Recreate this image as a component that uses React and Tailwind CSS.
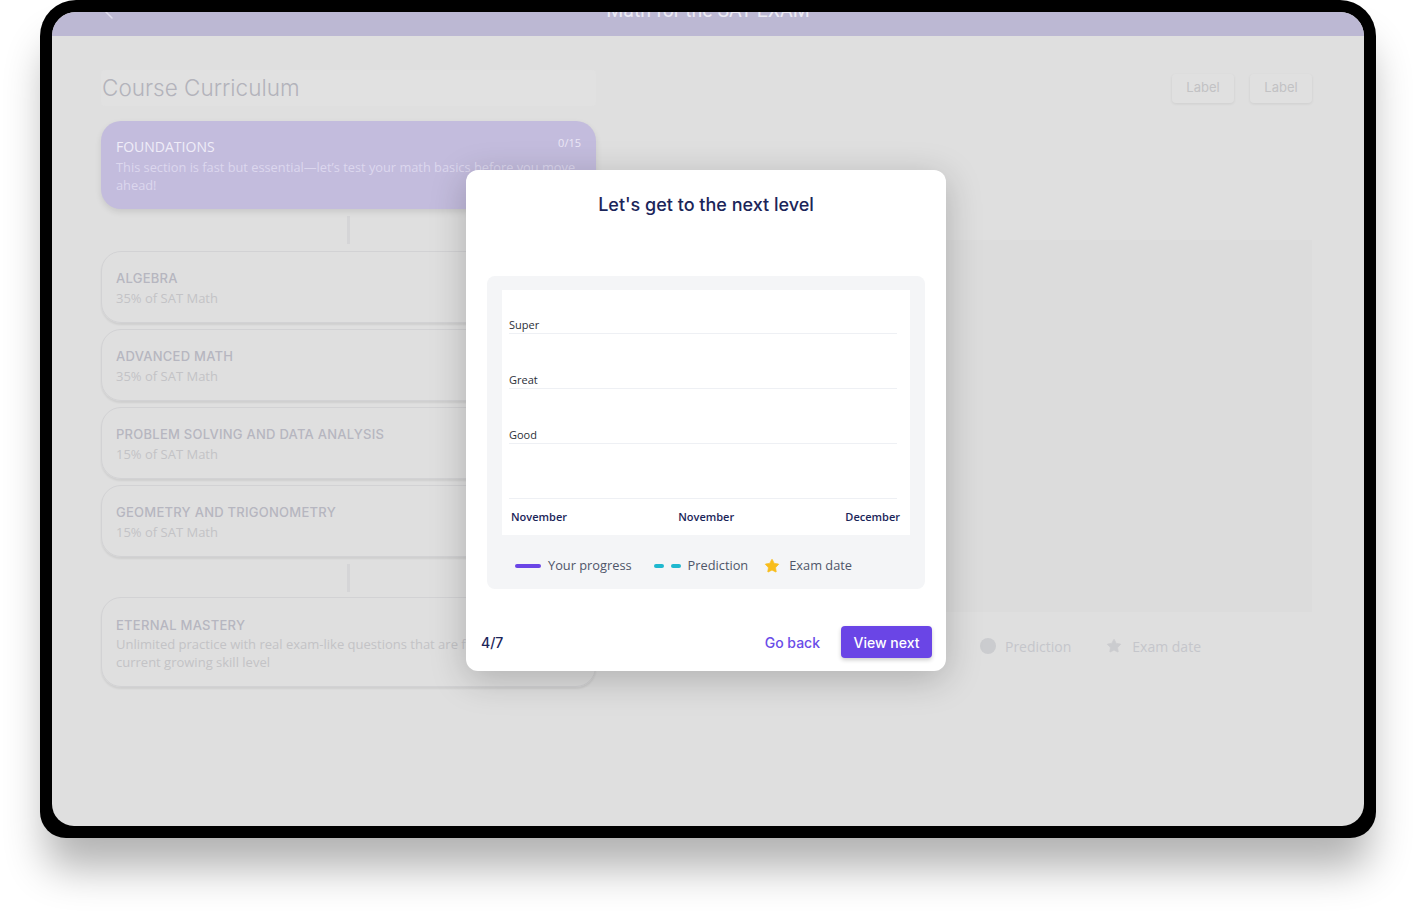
import { Star } from "lucide-react";

const title = { fontFamily: "Inter, 'Noto Sans', sans-serif" };
const body = { fontFamily: "'Open Sans', 'Noto Sans', sans-serif" };

const topics = [
  { name: "Algebra", share: "35% of SAT Math" },
  { name: "Advanced Math", share: "35% of SAT Math" },
  { name: "Problem Solving and Data Analysis", share: "15% of SAT Math" },
  { name: "Geometry and Trigonometry", share: "15% of SAT Math" },
];

const TopicCard = ({ name, share }) => (
  <div className="h-[72px] rounded-[20px] border border-[#d2d2d4] px-[14px] pt-[16px] shadow-[0_2px_2px_rgba(0,0,0,0.07)]">
    <p style={title} className="text-[13px] leading-5 font-medium uppercase tracking-[0.02em] text-[#b6b6c0]">
      {name}
    </p>
    <p style={body} className="text-[13px] leading-5 text-[#c3c3c6]">
      {share}
    </p>
  </div>
);

const Connector = ({ tight }) => (
  <div className={`flex justify-center pt-[7px] ${tight ? "pb-[5px]" : "pb-[7px]"}`}>
    <div className="w-[3px] h-[28px] bg-[#d5d5d7]" />
  </div>
);

const ChartRow = ({ label, first }) => (
  <div
    className={`${first ? "h-[30px]" : "h-[55px]"} flex items-end pb-[1px] border-b border-[#eef0f4] ml-[7px] mr-[13px]`}
  >
    <span style={body} className="text-[11px] leading-[14px] text-[#2b2f38]">
      {label}
    </span>
  </div>
);

const ProgressModal = () => (
  <div className="absolute left-[414px] top-[158px] w-[480px] h-[501px] bg-white rounded-[12px] shadow-[0_8px_36px_rgba(0,0,0,0.22)] flex flex-col">
    <h2 style={title} className="text-center text-[18px] leading-6 font-medium text-[#1b2559] mt-[23px]">
      Let's get to the next level
    </h2>

    <div className="mx-[21px] mt-[59px] h-[313px] rounded-[8px] bg-[#f4f5f7] px-[15px] pt-[14px]">
      <div className="bg-white h-[245px] pt-[14px]">
        <ChartRow label="Super" first />
        <ChartRow label="Great" />
        <ChartRow label="Good" />
        <ChartRow label="" />
        <div
          style={body}
          className="flex justify-between pl-[9px] pr-[10px] mt-[11px] text-[11px] leading-[14px] font-semibold text-[#1b2559]"
        >
          <span>November</span>
          <span>November</span>
          <span>December</span>
        </div>
      </div>

      <div style={body} className="flex items-center h-[54px] pl-[13px] pt-[8px] text-[12.8px] text-[#4f5669]">
        <span className="w-[26px] h-[4px] rounded-full bg-[#6a45e6]" />
        <span className="ml-[7px]">Your progress</span>
        <span className="ml-[22px] w-[10px] h-[4px] rounded-full bg-[#1fb8cf]" />
        <span className="ml-[7px] w-[10px] h-[4px] rounded-full bg-[#1fb8cf]" />
        <span className="ml-[7px]">Prediction</span>
        <Star size={16} className="ml-[16px] text-[#f8bd1c] fill-[#f8bd1c]" strokeWidth={1} />
        <span className="ml-[9px]">Exam date</span>
      </div>
    </div>

    <div className="flex items-center justify-between mt-auto mb-[13px] pl-[15px] pr-[14px]">
      <span style={title} className="text-[14px] font-medium text-[#1b2559]">
        4/7
      </span>
      <div className="flex items-center gap-[21px]">
        <button style={title} className="text-[14px] font-medium text-[#6a4de8]">
          Go back
        </button>
        <button
          style={title}
          className="h-[32px] w-[91px] rounded-[4px] bg-[#6a45e6] text-[14px] font-medium text-white shadow-[0_2px_4px_rgba(0,0,0,0.2)]"
        >
          View next
        </button>
      </div>
    </div>
  </div>
);

export default function App() {
  return (
    <div className="w-[1416px] h-[919px] bg-white overflow-hidden pl-[40px]">
      <div className="w-[1336px] h-[838px] bg-black p-[12px] rounded-t-[36px] rounded-b-[26px] shadow-[0_36px_42px_-6px_rgba(0,0,0,0.3)]">
        <div className="relative h-full rounded-t-[24px] rounded-b-[22px] overflow-hidden bg-[#dfdfdf]">
          {/* top bar, scrolled half out of view */}
          <div className="h-[24px] bg-[#bcb8d3] flex items-start overflow-hidden">
            <svg width="10" height="20" viewBox="0 0 10 20" className="ml-[52px] -mt-[11px] shrink-0">
              <path d="M8 3 L1 10 L8 17" fill="none" stroke="#dedcec" strokeWidth="1.5" strokeLinecap="round" strokeLinejoin="round" />
            </svg>
            <p
              className="flex-1 text-center text-[19.5px] leading-6 -mt-[13px] pr-[62px] text-[#ebe9f3]"
              style={{ fontFamily: "Roboto, 'Noto Sans', sans-serif" }}
            >
              Math for the SAT EXAM
            </p>
          </div>

          <div className="pl-[49px] pr-[52px] pt-[34px]">
            <div className="flex items-center justify-between h-[36px]">
              <div className="w-[495px] h-full flex items-center bg-[#e1e1e1] rounded-[4px]">
                <h1 style={title} className="ml-[1px] text-[22.5px] font-light text-[#b3b3bb]">
                  Course Curriculum
                </h1>
              </div>
              <div className="flex gap-[16px]">
                {["Label", "Label"].map((l, i) => (
                  <span
                    key={i}
                    style={title}
                    className="w-[62px] h-[29px] flex items-center justify-center rounded-[4px] bg-[#e0e0e0] text-[13px] text-[#c2c2c4] shadow-[0_1px_3px_rgba(0,0,0,0.08)]"
                  >
                    {l}
                  </span>
                ))}
              </div>
            </div>

            <div className="flex mt-[15px]">
              <div className="w-[495px] shrink-0">
                <div className="relative h-[88px] rounded-[20px] bg-[#c3bcdd] pl-[15px] pr-[6px] pt-[16px] shadow-[0_3px_6px_rgba(0,0,0,0.1)]">
                  <span style={body} className="absolute right-[15px] top-[14px] text-[11px] text-[#ebe7f6]">
                    0/15
                  </span>
                  <p style={body} className="text-[14px] leading-5 text-[#efecf8]">
                    FOUNDATIONS
                  </p>
                  <p style={body} className="text-[12.8px] leading-[18px] mt-[1px] text-[#dcd7ee]">
                    This section is fast but essential—let’s test your math basics before you move ahead!
                  </p>
                </div>

                <Connector />

                <div className="flex flex-col gap-[6px]">
                  {topics.map((t) => (
                    <TopicCard key={t.name} {...t} />
                  ))}
                </div>

                <Connector tight />

                <div className="h-[90px] rounded-[20px] border border-[#d2d2d4] px-[14px] pt-[17px] shadow-[0_2px_2px_rgba(0,0,0,0.07)]">
                  <p style={title} className="text-[13px] leading-5 font-medium uppercase tracking-[0.02em] text-[#b6b6c0]">
                    Eternal Mastery
                  </p>
                  <p style={body} className="text-[13px] leading-[18px] text-[#c3c3c6] pr-[40px]">
                    Unlimited practice with real exam-like questions that are fit to your current growing skill level
                  </p>
                </div>
              </div>

              <div className="flex-1 ml-[24px]">
                <div className="mt-[119px] h-[372px] bg-[#dcdcdc]" />
                <div style={body} className="flex items-center justify-end pr-[111px] mt-[24px] h-[20px] text-[14px] text-[#c5c6cb]">
                  <span className="w-[16px] h-[16px] rounded-full bg-[#cbcccf]" />
                  <span className="ml-[9px]">Prediction</span>
                  <Star size={16} className="ml-[35px] text-[#cbcccf] fill-[#cbcccf]" strokeWidth={1} />
                  <span className="ml-[10px]">Exam date</span>
                </div>
              </div>
            </div>
          </div>

          <ProgressModal />
        </div>
      </div>
    </div>
  );
}
